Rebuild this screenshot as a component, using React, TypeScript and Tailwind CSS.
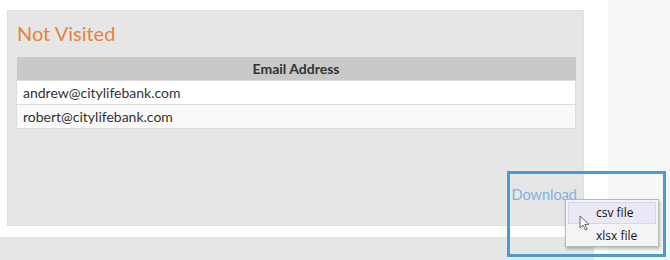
import React from "react";

const emails = ["andrew@citylifebank.com", "robert@citylifebank.com"];

function Cursor() {
  return (
    <svg width="11" height="16" viewBox="0 0 11 16" className="absolute left-[579px] top-[215px]">
      <path d="M1 1 L1 13 L4 10 L6.5 15 L8.2 14.2 L5.8 9.4 L10 9.4 Z" fill="#fff" stroke="#666" strokeWidth="1" strokeLinejoin="round" />
    </svg>
  );
}

export default function App() {
  return (
    <div className="relative w-[670px] h-[260px] bg-white overflow-hidden font-['Lato','Liberation_Sans',sans-serif]">
      <div className="flex h-full">
        {/* Main column */}
        <div className="w-[608px] flex flex-col">
          <div className="ml-[7px] mt-[10px] w-[577px] h-[216px] bg-[#e6e6e6] border border-[#e0e0e0] flex flex-col">
            <h2 className="ml-[9px] mt-[10px] text-[20px] leading-[24px] text-[#e8823c]">Not Visited</h2>
            <table className="ml-[8px] mt-[12px] w-[560px] border-collapse text-[14px] text-[#333]">
              <thead>
                <tr className="bg-[#c9c9c9] h-[23px]">
                  <th className="font-bold text-center leading-[23px] p-0">Email Address</th>
                </tr>
              </thead>
              <tbody>
                {emails.map((e, i) => (
                  <tr key={e} className={`h-[24px] border border-[#dcdcdc] ${i % 2 ? "bg-[#f9f9f9]" : "bg-white"}`}>
                    <td className="pl-[6px] leading-[22px] p-0">{e}</td>
                  </tr>
                ))}
              </tbody>
            </table>
            <div className="mt-auto mb-[21px] flex justify-end pr-[6px]">
              <a className="text-[14.5px] leading-[18px] text-[#7fb1e2]">Download</a>
            </div>
          </div>
          <div className="mt-[11px] w-[594px] flex-1 bg-[#e6e6e6] border-t border-[#e0e0e0]" />
        </div>
        {/* Right sidebar */}
        <div className="flex-1 bg-[#f7f7f7]" />
      </div>

      {/* Highlight box */}
      <div className="absolute left-[507px] top-[171px] w-[159px] h-[86px] border-[3px] border-[#4a9bd1]" />

      {/* Context menu */}
      <div className="absolute left-[565px] top-[199px] w-[94px] h-[48px] bg-[#f4f4f6] border border-[#b9b9b9] shadow-[1px_2px_3px_rgba(0,0,0,0.25)] p-[2px] font-['Open_Sans','Noto_Sans',sans-serif] text-[12px] text-[#111]">
        <div className="h-[22px] bg-[#e9e9f5] border border-[#d6d6ec] pl-[27px] leading-[20px]">csv file</div>
        <div className="h-[21px] pl-[28px] leading-[24px]">xlsx file</div>
      </div>
      <Cursor />
    </div>
  );
}
